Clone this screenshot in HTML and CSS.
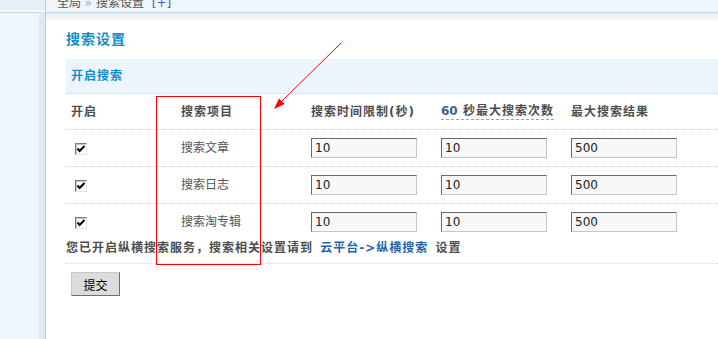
FILE: index.html
```html
<!DOCTYPE html>
<html lang="zh-CN">

<head>
    <meta charset="UTF-8">
    <title>搜索设置</title>
    <link rel="stylesheet" href="styles.css">
</head>

<body>
    <div class="side">
        <div class="side-top"></div>
        <div class="side-body"></div>
    </div>

    <div class="main">
        <div class="crumb">
            <div class="crumb-text">全局 <span class="sep">&raquo;</span> 搜索设置 <a href="#">[+]</a></div>
        </div>

        <form class="content">
            <h3 class="title">搜索设置</h3>
            <div class="band">开启搜索</div>

            <div class="row head">
                <div class="cell">开启</div>
                <div class="cell">搜索项目</div>
                <div class="cell">搜索时间限制(秒)</div>
                <div class="cell"><span class="tip"><em>60</em> 秒最大搜索次数</span></div>
                <div class="cell">最大搜索结果</div>
            </div>

            <div class="row">
                <div class="cell"><span class="chk"><svg viewBox="0 0 10 10"><path d="M1.5 4.5 L3.6 7 L8.5 2" /></svg></span></div>
                <div class="cell">搜索文章</div>
                <div class="cell"><input class="inp" type="text" value="10"></div>
                <div class="cell"><input class="inp" type="text" value="10"></div>
                <div class="cell"><input class="inp" type="text" value="500"></div>
            </div>

            <div class="row">
                <div class="cell"><span class="chk"><svg viewBox="0 0 10 10"><path d="M1.5 4.5 L3.6 7 L8.5 2" /></svg></span></div>
                <div class="cell">搜索日志</div>
                <div class="cell"><input class="inp" type="text" value="10"></div>
                <div class="cell"><input class="inp" type="text" value="10"></div>
                <div class="cell"><input class="inp" type="text" value="500"></div>
            </div>

            <div class="row">
                <div class="cell"><span class="chk"><svg viewBox="0 0 10 10"><path d="M1.5 4.5 L3.6 7 L8.5 2" /></svg></span></div>
                <div class="cell">搜索淘专辑</div>
                <div class="cell"><input class="inp" type="text" value="10"></div>
                <div class="cell"><input class="inp" type="text" value="10"></div>
                <div class="cell"><input class="inp" type="text" value="500"></div>
            </div>

            <div class="notice">您已开启纵横搜索服务，搜索相关设置请到 <a href="#">云平台-&gt;纵横搜索</a> 设置</div>

            <div class="actions">
                <button type="button" class="btn">提交</button>
            </div>
        </form>
    </div>

    <!-- annotation drawn over the screenshot -->
    <div class="mark-box"></div>
    <svg class="mark-arrow" width="718" height="339" viewBox="0 0 718 339">
        <line x1="341" y1="43" x2="280" y2="103" />
        <polygon points="274,109 284.6,104.1 279,98.5" />
    </svg>
</body>

</html>
```

FILE: styles.css
```css
body {
    margin: 0;
    width: 718px;
    height: 339px;
    overflow: hidden;
    display: flex;
    font-family: "DejaVu Sans", "Noto Sans CJK SC", sans-serif;
    font-size: 12px;
    color: #555;
    background: #fff;
    position: relative;
}

/* left menu column */
.side {
    width: 45px;
    display: flex;
    flex-direction: column;
    border-right: 1px solid #b3cee1;
}

.side-top {
    height: 10px;
    background: #e5eff7;
    border-bottom: 2px solid #f6fafd;
}

.side-body {
    flex: 1;
    background: #eff6fb;
    border-top: 1px solid #c4d6e3;
    border-right: 6px solid #dbeaf5;
}

.main {
    flex: 1;
    display: flex;
    flex-direction: column;
}

.crumb {
    height: 12px;
    overflow: hidden;
    background: #eef6fb;
    border-bottom: 1px solid #c4d6e3;
    padding-left: 11px;
}

.crumb-text {
    margin-top: -5px;
    line-height: 16px;
    color: #555;
}

.crumb-text .sep {
    color: #aaa;
}

.crumb-text a {
    color: #4060c8;
    text-decoration: none;
    margin-left: 4px;
}

.content {
    flex: 1;
    padding: 16px 0 0 20px;
    background: linear-gradient(#e4eef7, #fff 10px) no-repeat;
}

.title {
    margin: 0 0 10px;
    height: 20px;
    line-height: 20px;
    font-size: 14px;
    letter-spacing: 1px;
    color: #0f8fc8;
}

.band {
    height: 34px;
    line-height: 34px;
    padding-left: 5px;
    background: #edf5fc;
    border-bottom: 1px dotted #c6dbeb;
    font-weight: bold;
    letter-spacing: 1px;
    color: #0f8fc8;
}

.row {
    display: grid;
    grid-template-columns: 110px 130px 130px 130px 1fr;
    align-items: center;
    height: 36px;
    border-top: 1px dotted #c6dbeb;
}

.row.head {
    height: 35px;
    border-top: none;
    font-weight: bold;
    letter-spacing: 1px;
    color: #4d4d4d;
}

.cell {
    padding-left: 5px;
    line-height: 16px;
    white-space: nowrap;
}

.tip {
    display: inline-block;
    border-bottom: 1px dashed #e98585;
}

.tip em {
    font-style: normal;
    color: #3c628e;
    letter-spacing: 0;
}

.chk {
    display: block;
    width: 12px;
    height: 12px;
    box-sizing: border-box;
    margin: 1px 0 0 4px;
    background: #fff;
    border: 1px solid;
    border-color: #7c7c7c #e4e4dc #e4e4dc #7c7c7c;
    box-shadow: inset 1px 1px 0 #c4c4c4;
}

.chk svg {
    display: block;
    width: 10px;
    height: 10px;
    fill: none;
    stroke: #000;
    stroke-width: 2;
}

.inp {
    display: block;
    width: 106px;
    height: 20px;
    box-sizing: border-box;
    margin: 0;
    padding: 0 3px;
    background: #f8f8f8;
    border: 1px solid;
    border-color: #6a6a6a #c6c6c6 #c6c6c6 #6a6a6a;
    font-family: "DejaVu Sans", sans-serif;
    font-size: 12px;
    color: #222;
}

.notice {
    line-height: 16px;
    padding-bottom: 7px;
    border-bottom: 1px dotted #c6dbeb;
    font-weight: bold;
    letter-spacing: 1px;
    white-space: nowrap;
    color: #4d4d4d;
}

.notice a {
    color: #2366a8;
    text-decoration: none;
    margin: 0 2px;
}

.actions {
    padding: 8px 0 0 5px;
}

.btn {
    width: 49px;
    height: 24px;
    padding: 0;
    background: #dcdcdc;
    border: 1px solid;
    border-color: #c8c8c8 #6e6e6e #6e6e6e #c8c8c8;
    border-radius: 0;
    font-family: "Noto Sans CJK SC", sans-serif;
    font-size: 12px;
    color: #000;
}

.mark-box {
    position: absolute;
    left: 156px;
    top: 96px;
    width: 105px;
    height: 169px;
    box-sizing: border-box;
    border: 1px solid #f00;
}

.mark-arrow {
    position: absolute;
    left: 0;
    top: 0;
    pointer-events: none;
}

.mark-arrow line {
    stroke: #f00;
    stroke-width: 1;
}

.mark-arrow polygon {
    fill: #f00;
}
```
